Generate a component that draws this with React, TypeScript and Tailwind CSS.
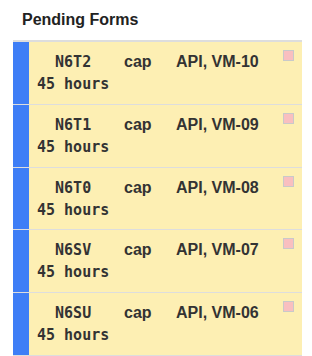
const forms = [
  { id: "N6T2", vm: "VM-10" },
  { id: "N6T1", vm: "VM-09" },
  { id: "N6T0", vm: "VM-08" },
  { id: "N6SV", vm: "VM-07" },
  { id: "N6SU", vm: "VM-06" },
];

function FormRow({ id, vm }: { id: string; vm: string }) {
  return (
    <div className="flex h-[62.8px] border-t border-[#dddddd]">
      <div className="w-4 shrink-0 bg-[#3e7ef6]" />
      <div className="relative flex-1 bg-[#fdefb3] pl-2 pt-[9px] text-[#333333]">
        <div className="flex items-baseline leading-[21px]">
          <span className="w-[87px] whitespace-pre font-['DejaVu_Sans_Mono',monospace] text-[15px] font-bold">
            {"  " + id}
          </span>
          <span className="w-[52px] font-['Liberation_Sans',Arial,sans-serif] text-[16px] font-bold">
            cap
          </span>
          <span className="font-['Liberation_Sans',Arial,sans-serif] text-[16px] font-bold">
            API, {vm}
          </span>
        </div>
        <div className="whitespace-pre font-['DejaVu_Sans_Mono',monospace] text-[15px] font-bold leading-[22px]">
          45 hours
        </div>
        {/* status marker */}
        <div className="absolute right-2 top-2 h-[11px] w-[11px] border border-[#c9c9c9] bg-[#f9bfc0]" />
      </div>
    </div>
  );
}

export default function App() {
  return (
    <div className="h-[356px] w-[312px] overflow-hidden bg-white">
      <h2 className="pl-[22px] pt-[10px] pb-[10px] font-['Liberation_Sans',Arial,sans-serif] text-[16px] font-bold leading-5 text-[#222222]">
        Pending Forms
      </h2>
      <div className="ml-[13px] mr-[10px] border-y border-[#dddddd]">
        {forms.map((f) => (
          <FormRow key={f.id} id={f.id} vm={f.vm} />
        ))}
      </div>
    </div>
  );
}
